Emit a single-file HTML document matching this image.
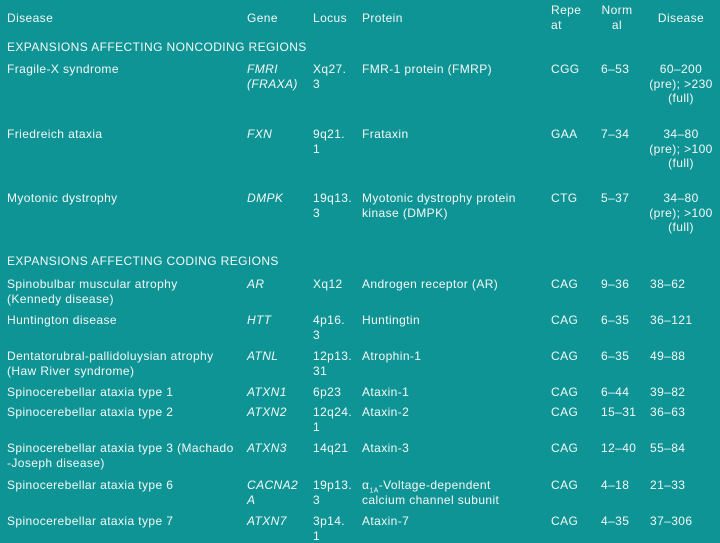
<!DOCTYPE html>
<html><head><meta charset="utf-8"><style>
html,body{margin:0;padding:0}
body{width:720px;height:540px;background:#0e9494;position:relative;overflow:hidden;font-family:"Liberation Sans",Arial,sans-serif;font-size:12px;letter-spacing:0.4px;line-height:14.5px;color:#f4f8f8}
.t{position:absolute;white-space:nowrap}
i{font-style:italic}
.c{text-align:center;width:80px;left:641px}
sub{font-size:7px;line-height:0}
</style></head><body>
<div class="t" style="left:7px;top:11px">Disease</div>
<div class="t" style="left:247px;top:11px">Gene</div>
<div class="t" style="left:313px;top:11px">Locus</div>
<div class="t" style="left:362px;top:11px">Protein</div>
<div class="t" style="left:551px;top:3px">Repe<br>at</div>
<div class="t" style="left:601px;top:3px;text-align:center;width:32px">Norm<br>al</div>
<div class="t c" style="top:11px">Disease</div>

<div class="t" style="left:7px;top:40px">EXPANSIONS AFFECTING NONCODING REGIONS</div>

<div class="t" style="left:7px;top:62px">Fragile-X syndrome</div>
<div class="t" style="left:247px;top:62px"><i>FMRI<br>(FRAXA)</i></div>
<div class="t" style="left:313px;top:62px">Xq27.<br>3</div>
<div class="t" style="left:362px;top:62px">FMR-1 protein (FMRP)</div>
<div class="t" style="left:551px;top:62px">CGG</div>
<div class="t" style="left:601px;top:62px">6–53</div>
<div class="t c" style="top:62px">60–200<br>(pre); &gt;230<br>(full)</div>

<div class="t" style="left:7px;top:127px">Friedreich ataxia</div>
<div class="t" style="left:247px;top:127px"><i>FXN</i></div>
<div class="t" style="left:313px;top:127px">9q21.<br>1</div>
<div class="t" style="left:362px;top:127px">Frataxin</div>
<div class="t" style="left:551px;top:127px">GAA</div>
<div class="t" style="left:601px;top:127px">7–34</div>
<div class="t c" style="top:127px">34–80<br>(pre); &gt;100<br>(full)</div>

<div class="t" style="left:7px;top:191px">Myotonic dystrophy</div>
<div class="t" style="left:247px;top:191px"><i>DMPK</i></div>
<div class="t" style="left:313px;top:191px">19q13.<br>3</div>
<div class="t" style="left:362px;top:191px">Myotonic dystrophy protein<br>kinase (DMPK)</div>
<div class="t" style="left:551px;top:191px">CTG</div>
<div class="t" style="left:601px;top:191px">5–37</div>
<div class="t c" style="top:191px">34–80<br>(pre); &gt;100<br>(full)</div>

<div class="t" style="left:7px;top:254px">EXPANSIONS AFFECTING CODING REGIONS</div>

<div class="t" style="left:7px;top:277px">Spinobulbar muscular atrophy<br>(Kennedy disease)</div>
<div class="t" style="left:247px;top:277px"><i>AR</i></div>
<div class="t" style="left:313px;top:277px">Xq12</div>
<div class="t" style="left:362px;top:277px">Androgen receptor (AR)</div>
<div class="t" style="left:551px;top:277px">CAG</div>
<div class="t" style="left:601px;top:277px">9–36</div>
<div class="t" style="left:650px;top:277px">38–62</div>

<div class="t" style="left:7px;top:313px">Huntington disease</div>
<div class="t" style="left:247px;top:313px"><i>HTT</i></div>
<div class="t" style="left:313px;top:313px">4p16.<br>3</div>
<div class="t" style="left:362px;top:313px">Huntingtin</div>
<div class="t" style="left:551px;top:313px">CAG</div>
<div class="t" style="left:601px;top:313px">6–35</div>
<div class="t" style="left:650px;top:313px">36–121</div>

<div class="t" style="left:7px;top:349px">Dentatorubral-pallidoluysian atrophy<br>(Haw River syndrome)</div>
<div class="t" style="left:247px;top:349px"><i>ATNL</i></div>
<div class="t" style="left:313px;top:349px">12p13.<br>31</div>
<div class="t" style="left:362px;top:349px">Atrophin-1</div>
<div class="t" style="left:551px;top:349px">CAG</div>
<div class="t" style="left:601px;top:349px">6–35</div>
<div class="t" style="left:650px;top:349px">49–88</div>

<div class="t" style="left:7px;top:385px">Spinocerebellar ataxia type 1</div>
<div class="t" style="left:247px;top:385px"><i>ATXN1</i></div>
<div class="t" style="left:313px;top:385px">6p23</div>
<div class="t" style="left:362px;top:385px">Ataxin-1</div>
<div class="t" style="left:551px;top:385px">CAG</div>
<div class="t" style="left:601px;top:385px">6–44</div>
<div class="t" style="left:650px;top:385px">39–82</div>

<div class="t" style="left:7px;top:405px">Spinocerebellar ataxia type 2</div>
<div class="t" style="left:247px;top:405px"><i>ATXN2</i></div>
<div class="t" style="left:313px;top:405px">12q24.<br>1</div>
<div class="t" style="left:362px;top:405px">Ataxin-2</div>
<div class="t" style="left:551px;top:405px">CAG</div>
<div class="t" style="left:601px;top:405px">15–31</div>
<div class="t" style="left:650px;top:405px">36–63</div>

<div class="t" style="left:7px;top:441px">Spinocerebellar ataxia type 3 (Machado<br>-Joseph disease)</div>
<div class="t" style="left:247px;top:441px"><i>ATXN3</i></div>
<div class="t" style="left:313px;top:441px">14q21</div>
<div class="t" style="left:362px;top:441px">Ataxin-3</div>
<div class="t" style="left:551px;top:441px">CAG</div>
<div class="t" style="left:601px;top:441px">12–40</div>
<div class="t" style="left:650px;top:441px">55–84</div>

<div class="t" style="left:7px;top:478px">Spinocerebellar ataxia type 6</div>
<div class="t" style="left:247px;top:478px"><i>CACNA2<br>A</i></div>
<div class="t" style="left:313px;top:478px">19p13.<br>3</div>
<div class="t" style="left:362px;top:478px">α<sub>1A</sub>-Voltage-dependent<br>calcium channel subunit</div>
<div class="t" style="left:551px;top:478px">CAG</div>
<div class="t" style="left:601px;top:478px">4–18</div>
<div class="t" style="left:650px;top:478px">21–33</div>

<div class="t" style="left:7px;top:514px">Spinocerebellar ataxia type 7</div>
<div class="t" style="left:247px;top:514px"><i>ATXN7</i></div>
<div class="t" style="left:313px;top:514px">3p14.<br>1</div>
<div class="t" style="left:362px;top:514px">Ataxin-7</div>
<div class="t" style="left:551px;top:514px">CAG</div>
<div class="t" style="left:601px;top:514px">4–35</div>
<div class="t" style="left:650px;top:514px">37–306</div>
</body></html>
